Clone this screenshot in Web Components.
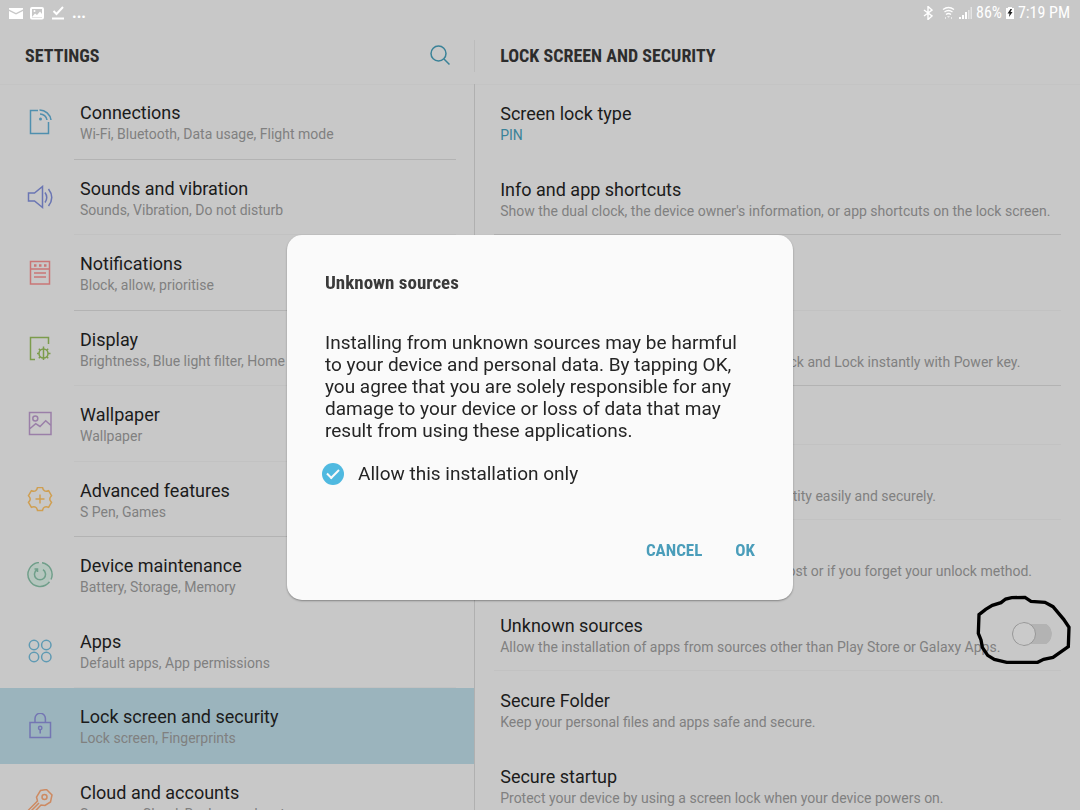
<!DOCTYPE html>
<html lang="en">
<head>
<meta charset="utf-8">
<meta name="viewport" content="width=device-width, initial-scale=1">
<title>Settings</title>
<style>
    :root {
        --bg: #c8c8c8;
        --text: #1b1b1b;
        --muted: #808080;
        --accent: #3a8298;
        --line: #b3b3b3;
        --line-faint: #c2c2c2;
        --selected: #9bb4bd;
        --condensed: "Roboto Condensed", Roboto, "Liberation Sans", sans-serif;
    }
    body {
        margin: 0;
        font-family: Roboto, "Liberation Sans", sans-serif;
        color: var(--text);
        background: var(--bg);
    }
</style>
</head>
<body>
<settings-screen>
    <status-bar slot="status" battery="86%" time="7:19 PM"></status-bar>

    <settings-pane slot="menu" heading="SETTINGS" searchable>
        <menu-item label="Connections" detail="Wi-Fi, Bluetooth, Data usage, Flight mode">
            <svg viewBox="0 0 28 28" stroke="#4f8fae"><path d="M12 1.500H4.500v23h18V13M13.500 1A11.500 11.500 0 0 1 25 11M14 5a7 7 0 0 1 7 6"/><circle cx="14.500" cy="10" r="1.500" fill="#4f8fae" stroke="none"/></svg>
        </menu-item>
        <menu-item label="Sounds and vibration" detail="Sounds, Vibration, Do not disturb" divider="faint">
            <svg viewBox="0 0 28 28" stroke="#6a75b3"><path d="M2.500 8h6l8-6.500v21l-8-6.500h-6zM19 7.500q3.500 5 0 10M22.500 4q6.500 8.500 0 17"/></svg>
        </menu-item>
        <menu-item label="Notifications" detail="Block, allow, prioritise">
            <svg viewBox="0 0 28 28" stroke="#c97676"><path d="M4.500 1.500h19v22.500h-19zM4.500 9h19M8 13h12M8 17h12"/><path d="M8 5.500h2.500M13 5.500h2.500M18 5.500h2.500" stroke-width="2.500"/></svg>
        </menu-item>
        <menu-item label="Display" detail="Brightness, Blue light filter, Home screen" divider="faint">
            <svg viewBox="0 0 28 28" stroke="#7c9c4c"><path d="M9 23.500H4.500v-22h18V8M17.500 10.500v13.500M11 17.500h2M22 17.500h2.500M12.800 12.800l1.500 1.500M20.700 14.300l1.500-1.500M12.800 22.200l1.500-1.500M20.700 20.700l1.500 1.500"/><circle cx="17.500" cy="17.500" r="4.500"/></svg>
        </menu-item>
        <menu-item label="Wallpaper" detail="Wallpaper" divider="faint">
            <svg viewBox="0 0 28 28" stroke="#9a7fa8"><path d="M3.500 1.500H25V23.500H3.500zM3.500 18l6.200-5.300 4.300 2.800 5.700-5.700 5.300 4.700"/><circle cx="9.300" cy="7.500" r="2.500"/></svg>
        </menu-item>
        <menu-item label="Advanced features" detail="S Pen, Games">
            <svg viewBox="0 0 28 28" stroke="#cf9f52"><path d="M11.500.500h5Q17.500 5.600 22.600 3.700L25.500 8.700Q22 12 25.500 15.300L22.600 20.300Q17.500 18.400 16.500 23.500h-5Q10.500 18.400 5.400 20.300L2.500 15.300Q6 12 2.500 8.700L5.400 3.700Q10.500 5.600 11.500.500zM14 7.500v9M9.500 12h9"/></svg>
        </menu-item>
        <menu-item label="Device maintenance" detail="Battery, Storage, Memory" divider="none">
            <svg viewBox="0 0 28 28" stroke="#6f9f8a"><circle cx="14" cy="12.500" r="11" fill="#b5c6be" stroke="none"/><path d="M16 .700A12 12 0 0 1 25 17.500M23.500 19.800A12 12 0 1 1 13 .500M17 7.700A5.500 5.500 0 1 1 11 7.700M8.500 7h3v3"/></svg>
        </menu-item>
        <menu-item label="Apps" detail="Default apps, App permissions" divider="faint">
            <svg viewBox="0 0 28 28" stroke="#5f9ab3"><circle cx="8" cy="7" r="4.700"/><circle cx="20.300" cy="7" r="4.700"/><circle cx="8" cy="19" r="4.700"/><circle cx="20.300" cy="19" r="4.700"/></svg>
        </menu-item>
        <menu-item label="Lock screen and security" detail="Lock screen, Fingerprints" divider="none" selected>
            <svg viewBox="0 0 28 28" stroke="#7476b3"><path d="M4 9.500h20.500v15H4zM9 9.500V5.500a5.200 5.200 0 0 1 10.400 0v4M14.200 16.500v4"/><circle cx="14.200" cy="15" r="1.700"/></svg>
        </menu-item>
        <menu-item label="Cloud and accounts" detail="Samsung Cloud, Backup and restore">
            <svg viewBox="0 0 28 28" stroke="#cd8a62"><path d="M14.500 1.500l6-1 5.500 5.500-1.500 7-5.500 3.500-4-.500L6 25.500l-4-.500.500-4L11.500 12l-1-4zM4 23L13 14"/><circle cx="18.500" cy="8" r="2.500"/></svg>
        </menu-item>
    </settings-pane>

    <settings-pane slot="detail" heading="LOCK SCREEN AND SECURITY">
        <preference-item label="Screen lock type" detail="PIN" accent divider="none"></preference-item>
        <preference-item label="Info and app shortcuts" detail="Show the dual clock, the device owner's information, or app shortcuts on the lock screen."></preference-item>
        <preference-item label="Notifications" detail="Show content" divider="faint"></preference-item>
        <preference-item label="Secure lock settings" detail="Set your secure lock functions, such as Auto lock and Lock instantly with Power key."></preference-item>
        <preference-item label="Fingerprints" divider="faint"></preference-item>
        <preference-item label="Samsung Pass" detail="Use biometric authentication to verify your identity easily and securely." divider="faint"></preference-item>
        <preference-item label="Find My Mobile" detail="Locate and control your device remotely if it's lost or if you forget your unlock method." divider="none"></preference-item>
        <preference-item label="Unknown sources" detail="Allow the installation of apps from sources other than Play Store or Galaxy Apps." divider="faint">
            <toggle-switch label="Unknown sources" circled></toggle-switch>
        </preference-item>
        <preference-item label="Secure Folder" detail="Keep your personal files and apps safe and secure." divider="none"></preference-item>
        <preference-item label="Secure startup" detail="Protect your device by using a screen lock when your device powers on."></preference-item>
    </settings-pane>

    <confirm-dialog slot="dialog" heading="Unknown sources" option="Allow this installation only">
        Installing from unknown sources may be harmful to your device and personal data. By tapping OK, you agree that you are solely responsible for any damage to your device or loss of data that may result from using these applications.
    </confirm-dialog>
</settings-screen>

<script>
class SettingsScreen extends HTMLElement {
    constructor() {
        super();
        this.attachShadow({ mode: 'open' }).innerHTML = `
            <style>
                :host {
                    display: flex;
                    flex-direction: column;
                    height: 100vh;
                    overflow: hidden;
                }
                main {
                    flex: 1;
                    min-height: 0;
                    display: grid;
                    grid-template-columns: 44% minmax(0, 1fr);
                }
            </style>
            <slot name="status"></slot>
            <main>
                <slot name="menu"></slot>
                <slot name="detail"></slot>
            </main>
            <slot name="dialog"></slot>
        `;
    }
}

class StatusBar extends HTMLElement {
    constructor() {
        super();
        this.attachShadow({ mode: 'open' });
    }

    connectedCallback() {
        this.shadowRoot.innerHTML = `
            <style>
                :host {
                    display: flex;
                    justify-content: space-between;
                    height: 25px;
                    padding: 0 10px 0 9px;
                    color: #fff;
                    font: 16px/25px var(--condensed);
                }
                div {
                    display: flex;
                    align-items: center;
                    gap: 7px;
                }
                .right {
                    gap: 4px;
                }
                .bluetooth {
                    margin-right: 4px;
                }
                .more {
                    font-weight: bold;
                }
                svg {
                    display: block;
                    fill: #fff;
                }
            </style>
            <div>
                <svg width="14" height="14" viewBox="0 0 14 14"><path d="M0 2h14v1.500L7 7 0 3.500zM0 5l7 3.500L14 5v8H0z"/></svg>
                <svg width="14" height="14" viewBox="0 0 14 14"><rect x="1" y="2" width="12" height="10.500" rx="1" fill="none" stroke="#fff" stroke-width="2"/><path d="M2 11l3-3.500 2 1.500 3-3.500 2 2.500v3z"/><circle cx="4.500" cy="5" r="1"/></svg>
                <svg width="14" height="14" viewBox="0 0 14 14"><path d="M1 11.500h12v2H1z"/><path d="M2.500 5l3 3L12 1" fill="none" stroke="#fff" stroke-width="2"/></svg>
                <span class="more">...</span>
            </div>
            <div class="right">
                <svg class="bluetooth" width="10" height="14" viewBox="0 0 10 14"><path d="M1 4l8 6-4 3.500V.500L9 4l-8 6" fill="none" stroke="#fff" stroke-width="1.400"/></svg>
                <svg width="14" height="14" viewBox="2 0 14 14"><path d="M4 3.500q5.500-4 11 0M5.500 6q4-3 8 0M7 8.500q2.500-2 5 0" fill="none" stroke="#fff" stroke-width="1.300"/><path d="M8 10h3l-1.500 2zM6 11h1v2H6zM12 11h1v2h-1z" opacity=".6"/></svg>
                <svg width="13" height="14" viewBox="0 0 13 14"><path d="M0 11h2v2H0zM3 9h2v4H3zM6 6h2v7H6z"/><path d="M9 4h1.500v9H9zM11.500 1H13v12h-1.500z" opacity=".5"/></svg>
                <span>${this.getAttribute('battery')}</span>
                <svg width="8" height="12" viewBox="0 0 8 12"><path d="M0 1h2V0h4v1h2v11H0z"/><path d="M4.500 2L1.500 6.500h2L3 10l3.500-5h-2L6 2z" fill="#222"/></svg>
                <span>${this.getAttribute('time')}</span>
            </div>
        `;
    }
}

class SettingsPane extends HTMLElement {
    constructor() {
        super();
        this.attachShadow({ mode: 'open' });
    }

    connectedCallback() {
        const search = this.hasAttribute('searchable') ? `
            <button type="button" aria-label="Search">
                <svg width="22" height="22" viewBox="0 0 22 22"><circle cx="9.500" cy="8.500" r="7.500"/><path d="M15 14l5.500 5.500"/></svg>
            </button>` : '';

        this.shadowRoot.innerHTML = `
            <style>
                :host {
                    display: flex;
                    flex-direction: column;
                    min-width: 0;
                    min-height: 0;
                    overflow: hidden;
                }
                header {
                    display: flex;
                    align-items: center;
                    justify-content: space-between;
                    height: 32px;
                    margin: 15px 0 12px;
                    padding: 0 23px 0 25px;
                }
                :host([searchable]) header {
                    border-right: 1px solid #bcbcbc;
                }
                h1 {
                    margin: 0;
                    color: #2d2d2d;
                    font: bold 18px/24px var(--condensed);
                }
                button {
                    padding: 0;
                    border: 0;
                    background: none;
                }
                svg {
                    display: block;
                    fill: none;
                    stroke: var(--accent);
                    stroke-width: 1.500;
                }
                nav {
                    flex: 1;
                    min-height: 0;
                    overflow: hidden;
                    box-shadow: inset 0 1px #c4c4c4;
                }
                :host([searchable]) nav {
                    border-right: 1px solid #b0b0b0;
                }
            </style>
            <header>
                <h1>${this.getAttribute('heading')}</h1>
                ${search}
            </header>
            <nav><slot></slot></nav>
        `;
    }
}

// Shared by the rows of both panes
const rowStyle = `
    :host {
        display: flex;
        flex-direction: column;
        box-sizing: border-box;
        height: 75px;
        --rule: var(--line);
    }
    :host(:nth-child(odd)) {
        height: 76px;
    }
    :host([divider="faint"]) {
        --rule: var(--line-faint);
    }
    :host([divider="none"]) {
        --rule: transparent;
    }
    .row {
        flex: 1;
        display: flex;
        padding-top: 18px;
        color: inherit;
        text-decoration: none;
    }
    .title {
        display: block;
        font-size: 18px;
        line-height: 22px;
    }
    .detail {
        display: block;
        color: var(--muted);
        font-size: 14px;
        line-height: 20px;
        white-space: nowrap;
    }
    .rule {
        height: 1px;
        background: var(--rule);
    }
`;

class MenuItem extends HTMLElement {
    constructor() {
        super();
        this.attachShadow({ mode: 'open' });
    }

    connectedCallback() {
        this.shadowRoot.innerHTML = `
            <style>
                ${rowStyle}
                :host([selected]) {
                    background: var(--selected);
                }
                .row {
                    gap: 26px;
                    padding-left: 26px;
                }
                .rule {
                    margin: 0 18px 0 74px;
                }
                ::slotted(svg) {
                    width: 28px;
                    height: 28px;
                    margin-top: 7px;
                    fill: none;
                    stroke-width: 1.500;
                }
            </style>
            <a class="row" href="#">
                <slot></slot>
                <span>
                    <span class="title">${this.getAttribute('label')}</span>
                    <span class="detail">${this.getAttribute('detail')}</span>
                </span>
            </a>
            <div class="rule"></div>
        `;
    }
}

class PreferenceItem extends HTMLElement {
    constructor() {
        super();
        this.attachShadow({ mode: 'open' });
    }

    connectedCallback() {
        const detail = this.getAttribute('detail');

        this.shadowRoot.innerHTML = `
            <style>
                ${rowStyle}
                .row {
                    justify-content: space-between;
                    padding: 19px 28px 0 25px;
                }
                :host([accent]) .detail {
                    color: var(--accent);
                }
                .rule {
                    margin: 0 19px;
                }
                ${detail ? '' : ':host(:nth-child(n)) { height: 59px; }'}
            </style>
            <div class="row">
                <div>
                    <span class="title">${this.getAttribute('label')}</span>
                    ${detail ? `<span class="detail">${detail}</span>` : ''}
                </div>
                <slot></slot>
            </div>
            <div class="rule"></div>
        `;
    }
}

class ToggleSwitch extends HTMLElement {
    constructor() {
        super();
        this.attachShadow({ mode: 'open' });
    }

    connectedCallback() {
        const circle = `
            <svg viewBox="0 0 345 255" aria-hidden="true">
                <path d="M180 22L140 23 122 27 108 38 82 46 62 58 42 74 40 130 48 150 52 172 68 196 88 208 125 217H218L236 208 264 202 310 170 312 112 296 88 264 50 240 37 198 34z"/>
            </svg>`;

        this.shadowRoot.innerHTML = `
            <style>
                :host {
                    display: block;
                    position: relative;
                    width: 40px;
                    height: 24px;
                    margin-top: 7px;
                }
                input {
                    appearance: none;
                    display: flex;
                    align-items: center;
                    width: 40px;
                    height: 24px;
                    margin: 0;
                    border-radius: 12px;
                    background: linear-gradient(#b3b3b3, #b3b3b3) center / 100% 20px no-repeat;
                    clip-path: inset(0 round 12px);
                }
                input::before {
                    content: "";
                    box-sizing: border-box;
                    width: 24px;
                    height: 24px;
                    border: 1px solid #979797;
                    border-radius: 50%;
                    background: #cacaca;
                }
                input:checked {
                    justify-content: flex-end;
                }
                /* hand-drawn ring over the switch */
                svg {
                    position: absolute;
                    top: -32px;
                    left: -47px;
                    width: 115px;
                    height: 85px;
                    fill: none;
                    stroke: #000;
                    stroke-width: 10;
                    pointer-events: none;
                }
            </style>
            <input type="checkbox" role="switch" aria-label="${this.getAttribute('label')}">
            ${this.hasAttribute('circled') ? circle : ''}
        `;
    }
}

class ConfirmDialog extends HTMLElement {
    constructor() {
        super();
        this.attachShadow({ mode: 'open' });
    }

    connectedCallback() {
        this.shadowRoot.innerHTML = `
            <style>
                :host {
                    position: fixed;
                    inset: 25px 0 0;
                    display: grid;
                    place-items: center;
                }
                dialog {
                    position: static;
                    box-sizing: border-box;
                    width: min(506px, 90vw);
                    margin: 0;
                    padding: 36px 38px 38px;
                    border: 0;
                    border-radius: 15px;
                    color: #252525;
                    background: #fafafa;
                    box-shadow: 0 1px 2px rgba(0, 0, 0, .35);
                }
                h2 {
                    margin: 0 0 37px;
                    color: #3a3a3a;
                    font: bold 19px/24px var(--condensed);
                }
                p {
                    margin: 0 0 21px;
                    font-size: 19px;
                    line-height: 22px;
                }
                label {
                    display: flex;
                    align-items: center;
                    gap: 14px;
                    margin: 0 0 53px -3px;
                    font-size: 19px;
                    line-height: 22px;
                }
                input {
                    appearance: none;
                    display: grid;
                    place-items: center;
                    width: 22px;
                    height: 22px;
                    margin: 0;
                    border-radius: 50%;
                    background: #bbb;
                }
                input:checked {
                    background: #4fb9e0;
                }
                input::before {
                    content: "";
                    width: 10px;
                    height: 5px;
                    margin-bottom: 3px;
                    border: solid #fafafa;
                    border-width: 0 0 2px 2px;
                    transform: rotate(-45deg);
                }
                .actions {
                    display: flex;
                    justify-content: flex-end;
                    gap: 33px;
                }
                button {
                    padding: 0;
                    border: 0;
                    background: none;
                    color: #4a9dba;
                    font: bold 17px/24px var(--condensed);
                }
            </style>
            <dialog open aria-labelledby="heading">
                <h2 id="heading">${this.getAttribute('heading')}</h2>
                <p><slot></slot></p>
                <label><input type="checkbox" checked>${this.getAttribute('option')}</label>
                <div class="actions">
                    <button type="button">CANCEL</button>
                    <button type="button">OK</button>
                </div>
            </dialog>
        `;
    }
}

customElements.define('settings-screen', SettingsScreen);
customElements.define('status-bar', StatusBar);
customElements.define('settings-pane', SettingsPane);
customElements.define('menu-item', MenuItem);
customElements.define('preference-item', PreferenceItem);
customElements.define('toggle-switch', ToggleSwitch);
customElements.define('confirm-dialog', ConfirmDialog);
</script>
</body>
</html>
